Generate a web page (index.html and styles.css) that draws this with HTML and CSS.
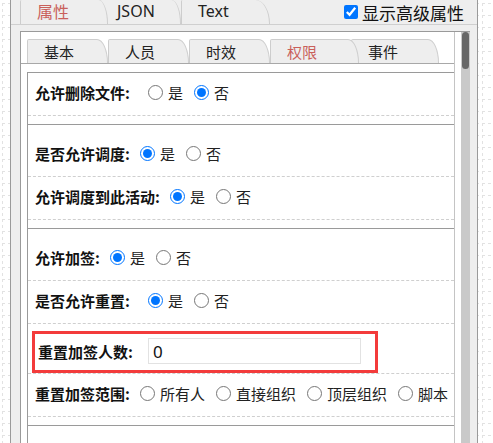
FILE: index.html
```html
<!DOCTYPE html>
<html lang="zh">
<head>
<meta charset="utf-8">
<title>属性</title>
<link rel="stylesheet" href="styles.css">
</head>
<body>
<div class="panel">
  <div class="header">
    <div class="tabs top-tabs">
      <div class="tab active">属性</div>
      <div class="tab">JSON</div>
      <div class="tab tab-wide">Text</div>
    </div>
    <label class="adv"><input type="checkbox" checked><span>显示高级属性</span></label>
  </div>
  <div class="scroll">
    <div class="scroll-inner">
      <div class="tabs inner-tabs">
        <div class="tab">基本</div>
        <div class="tab">人员</div>
        <div class="tab">时效</div>
        <div class="tab active">权限</div>
        <div class="tab tab-last">事件</div>
      </div>
      <div class="content">
        <div class="group group-first">
          <div class="row">
            <span class="lbl lbl-wide">允许删除文件:</span>
            <label class="opt"><input type="radio" name="del"><span>是</span></label>
            <label class="opt"><input type="radio" name="del" checked><span>否</span></label>
          </div>
        </div>
        <div class="group">
          <div class="row">
            <span class="lbl">是否允许调度:</span>
            <label class="opt"><input type="radio" name="dd" checked><span>是</span></label>
            <label class="opt"><input type="radio" name="dd"><span>否</span></label>
          </div>
          <div class="row">
            <span class="lbl">允许调度到此活动:</span>
            <label class="opt"><input type="radio" name="dh" checked><span>是</span></label>
            <label class="opt"><input type="radio" name="dh"><span>否</span></label>
          </div>
        </div>
        <div class="group">
          <div class="row">
            <span class="lbl">允许加签:</span>
            <label class="opt"><input type="radio" name="jq" checked><span>是</span></label>
            <label class="opt"><input type="radio" name="jq"><span>否</span></label>
          </div>
          <div class="row">
            <span class="lbl lbl-wide">是否允许重置:</span>
            <label class="opt"><input type="radio" name="cz" checked><span>是</span></label>
            <label class="opt"><input type="radio" name="cz"><span>否</span></label>
          </div>
          <div class="row row-tall">
            <div class="hl">
              <span class="lbl">重置加签人数:</span>
              <input class="num" type="text" value="0">
            </div>
          </div>
          <div class="row">
            <span class="lbl">重置加签范围:</span>
            <label class="opt"><input type="radio" name="fw"><span>所有人</span></label>
            <label class="opt"><input type="radio" name="fw"><span>直接组织</span></label>
            <label class="opt"><input type="radio" name="fw"><span>顶层组织</span></label>
            <label class="opt"><input type="radio" name="fw"><span>脚本</span></label>
          </div>
        </div>
        <div class="group">
          <div class="row"></div>
        </div>
      </div>
    </div>
    <div class="scrollbar"><div class="thumb"></div></div>
  </div>
</div>
</body>
</html>
```
FILE: styles.css
```css
html, body {
  margin: 0;
  height: 100%;
}
body {
  overflow: hidden;
  font-family: "Noto Sans CJK SC", "Noto Sans", sans-serif;
  color: #111;
  background-color: #fff;
  background-image:
    linear-gradient(to right, transparent 3px, #fff 3px),
    linear-gradient(to bottom, #e2e2e2 1px, transparent 1px),
    linear-gradient(to bottom, transparent 3px, #fff 3px),
    linear-gradient(to right, #e2e2e2 1px, transparent 1px);
  background-size: 6px 12px, 12px 12px, 12px 6px, 12px 12px;
  background-position: 2px 3px, 2px 3px, 2px 3px, 2px 3px;
}
.panel {
  box-sizing: border-box;
  height: 443px;
  margin: 0 15px 0 10px;
  border-left: 1px solid #9a9a9a;
  border-right: 1px solid #9a9a9a;
  background: #eeeeee;
  display: flex;
  flex-direction: column;
}
.header {
  height: 24px;
  flex: none;
  border-bottom: 1px solid #cfcfcf;
  display: flex;
  align-items: stretch;
  justify-content: space-between;
  padding-left: 9px;
  padding-right: 13px;
}
.tabs {
  display: flex;
  align-items: flex-end;
}
.tab {
  box-sizing: border-box;
  flex: none;
  width: 81px;
  border: 1px solid #cdcdcd;
  border-bottom: none;
  border-top-right-radius: 11px 24px;
  border-top-left-radius: 2px;
  background: #eeeeee;
  padding-left: 16px;
  font-size: 15px;
  color: #222;
  position: relative;
}
.tab.active {
  width: 89px;
  margin-right: -8px;
  z-index: 2;
  color: #c9605b;
}
.top-tabs .tab {
  height: 24px;
  border-top: none;
  line-height: 23px;
  font-size: 16px;
  font-family: "Noto Sans", "Noto Sans CJK SC", sans-serif;
  border-top-right-radius: 12px 30px;
}
.top-tabs .tab.active {
  width: 88px;
  font-family: "Noto Sans CJK SC", sans-serif;
}
.top-tabs .tab-wide {
  width: 89px;
  border-top-right-radius: 18px 30px;
}
.adv {
  display: flex;
  align-items: center;
  gap: 4px;
  font-size: 17px;
  color: #111;
}
.adv input {
  width: 14px;
  height: 14px;
  margin: 0;
}
.scroll {
  flex: 1;
  min-height: 0;
  margin: 6px 7px 0 9px;
  border-left: 1px solid #9a9a9a;
  border-top: 1px solid #9a9a9a;
  background: #fff;
  display: flex;
  overflow: hidden;
}
.scroll-inner {
  flex: 1;
  min-width: 0;
  margin-right: 6px;
  border-right: 1px solid #c4c4c4;
}
.scrollbar {
  width: 9px;
  flex: none;
  background: #c9c9c9;
  display: flex;
  justify-content: center;
}
.thumb {
  width: 7px;
  height: 37px;
  border-radius: 4px;
  background: #676767;
}
.inner-tabs {
  padding: 7px 0 0 6px;
  border-bottom: 1px solid #a8a8a8;
}
.inner-tabs .tab {
  height: 24px;
  line-height: 23px;
}
.inner-tabs .tab-last {
  width: 88px;
}
.content {
  margin: 8px 0 0 6px;
  border-left: 1px solid #9a9a9a;
  border-top: 1px solid #9a9a9a;
}
.group {
  padding: 9px 0 8px;
}
.group + .group {
  border-top: 1px solid #9a9a9a;
}
.group-first {
  padding-top: 0;
}
.row {
  box-sizing: border-box;
  height: 43px;
  border-bottom: 1px dashed #cfcfcf;
  display: flex;
  align-items: center;
  padding: 0 0 3px 7px;
  font-size: 15px;
}
.lbl {
  font-weight: bold;
  color: #111;
}
.lbl-wide {
  margin-right: 8px;
}
.opt {
  display: flex;
  align-items: center;
  margin-left: 10px;
  color: #222;
}
.opt + .opt {
  margin-left: 11px;
}
.opt input {
  width: 15px;
  height: 15px;
  margin: 0 5px 0 0;
}
.row-tall {
  height: 50px;
  padding-bottom: 0;
  align-items: flex-end;
}
.hl {
  box-sizing: border-box;
  width: 346px;
  height: 42px;
  margin-left: -3px;
  border: 3px solid #f33b3b;
  display: flex;
  align-items: center;
  padding: 0 0 2px 3px;
}
.num {
  box-sizing: border-box;
  width: 213px;
  height: 26px;
  margin-left: 15px;
  border: 1px solid #e2e2e2;
  padding: 0 4px;
  font-size: 17px;
  font-family: "Noto Sans", sans-serif;
  color: #111;
  outline: none;
}
```
